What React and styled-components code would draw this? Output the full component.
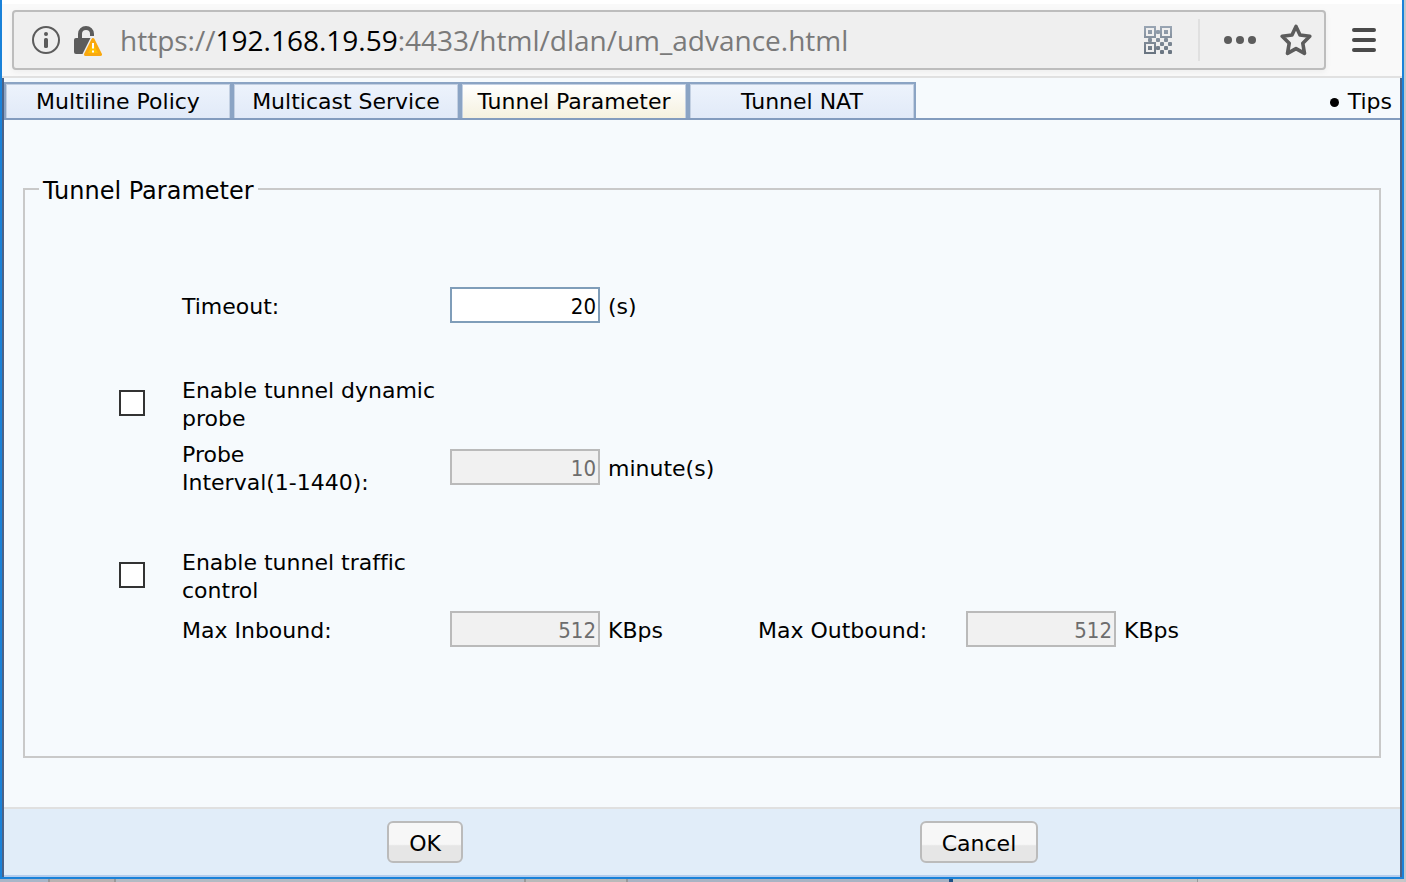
import React, { useState } from "react";
import styled, { createGlobalStyle } from "styled-components";

const GlobalStyle = createGlobalStyle`
  *, *::before, *::after { box-sizing: border-box; }
  body {
    margin: 0;
    background: #c3c6cb;
    color: #000;
    font-family: "DejaVu Sans", Verdana, sans-serif;
    font-size: 22px;
    line-height: 28px;
    font-variant-ligatures: none;
  }
`;

const Desktop = styled.div`
  display: flex;
  flex-direction: column;
  min-height: 100vh;
  padding-right: 2px;
`;

const Window = styled.div`
  flex: 1;
  display: flex;
  flex-direction: column;
  border: solid #1a82d9;
  border-width: 0 2px 2px;
`;

const Chrome = styled.header`
  display: flex;
  align-items: center;
  gap: 14px;
  height: 78px;
  padding: 4px 14px 0 10px;
  background: linear-gradient(#fff 4px, #f9f9f9 4px);
  border-bottom: 2px solid #e1e1e1;
`;

const AddressBar = styled.div`
  flex: 1;
  min-width: 0;
  display: flex;
  align-items: center;
  height: 60px;
  padding-left: 16px;
  background: #efefef;
  border: 2px solid #bdbdbd;
  border-radius: 4px;
  box-shadow: 0 2px 6px rgba(0, 0, 0, 0.05);
`;

const IconButton = styled.button`
  display: flex;
  flex: none;
  align-items: center;
  justify-content: center;
  width: ${(p) => p.$width || 56}px;
  height: 40px;
  padding: 0;
  border: 0;
  background: none;
`;

const Address = styled.div`
  flex: 1;
  min-width: 0;
  padding-left: 6px;
  overflow: hidden;
  white-space: nowrap;
  font-family: "Open Sans", "Segoe UI", sans-serif;
  font-size: 28px;
  line-height: 40px;
  color: #7a7a7a;
`;

const Host = styled.span`
  color: #000;
`;

const Separator = styled.span`
  width: 2px;
  height: 42px;
  margin: 0 12px 0 24px;
  background: #e0e0e0;
`;

const Page = styled.main`
  flex: 1;
  display: flex;
  flex-direction: column;
  background: #f6fafd;
  border: solid #4a6389;
  border-width: 0 2px;
`;

const TabBar = styled.nav`
  display: flex;
  align-items: stretch;
  height: 42px;
  padding-top: 4px;
  border-bottom: 2px solid #839cbe;
`;

const Tab = styled.button`
  width: 228px;
  padding: 2px 0 0;
  border: solid #8ba4c4;
  border-width: 2px 2px 0;
  box-shadow: inset 1px 1px 0 #c3d0e2, inset -1px 0 0 #c3d0e2;
  background: ${(p) =>
    p.$active
      ? "linear-gradient(#ffffff, #f5f1df)"
      : "linear-gradient(#edf3fc, #e1eaf8)"};
  color: #000;
  font: inherit;
`;

const Tips = styled.a`
  display: flex;
  align-items: center;
  gap: 9px;
  margin-left: auto;
  padding: 4px 8px 0 0;
  color: #000;
  text-decoration: none;

  &::before {
    content: "";
    width: 9px;
    height: 9px;
    border-radius: 50%;
    background: #000;
  }
`;

const Form = styled.form`
  flex: 1;
  display: flex;
  flex-direction: column;
`;

const Group = styled.fieldset`
  flex: 1;
  min-width: 0;
  margin: 51px 19px 49px;
  padding: 80px 0 0 92px;
  border: 2px solid #c9c9c9;
`;

const Legend = styled.legend`
  margin-left: -78px;
  padding: 4px 4px 0;
  font-size: 24px;
  line-height: 32px;
`;

const Row = styled.div`
  display: grid;
  grid-template-columns: 65px 268px 308px 208px 1fr;
  align-items: center;
  min-height: ${(p) => p.$height || 64}px;
  margin-bottom: ${(p) => p.$after || 0}px;
`;

const Label = styled.label`
  grid-column: ${(p) => p.$column || 2};
  max-width: ${(p) => (p.$narrow ? "220px" : "none")};
  padding-top: 4px;
`;

const Unbroken = styled.span`
  display: inline-block;
  white-space: nowrap;
`;

const Check = styled.input`
  appearance: none;
  width: 26px;
  height: 26px;
  margin: 0 0 0 2px;
  border: 2px solid #333;
  background: #fff;

  &:checked {
    box-shadow: inset 0 0 0 4px #fff;
    background: #333;
  }
`;

const Field = styled.div`
  display: flex;
  align-items: center;
  gap: 8px;
`;

const Unit = styled.span`
  padding-top: 4px;
`;

const NumberBox = styled.input`
  width: 150px;
  height: 36px;
  padding: 2px 2px 0;
  border: 2px solid #7f9db9;
  border-radius: 0;
  background: #fff;
  color: #000;
  font-family: "DejaVu Sans Condensed", Tahoma, sans-serif;
  font-size: 22px;
  text-align: right;

  &:disabled {
    border-color: #bababa;
    background: #f1f1f1;
    color: #6d6d6d;
  }
`;

const Footer = styled.footer`
  display: grid;
  grid-template-columns: 1fr 1fr;
  justify-items: center;
  padding: 12px 144px;
  background: #e1edf9;
  border-top: 2px solid #e0e0e0;
  border-bottom: 2px solid #b4cdee;
`;

const ActionButton = styled.button`
  height: 42px;
  padding: 4px 20px 0;
  border: 2px solid #bbb;
  border-radius: 6px;
  background: linear-gradient(#f7f7f7 56%, #e6e6e6 60%);
  color: #000;
  font: inherit;
`;

const Behind = styled.div`
  height: 3px;
  background: linear-gradient(
    90deg,
    #a9b6c8 0 48px, #999 48px 50px, #b9b2b2 50px 114px, #999 114px 116px,
    #b3bac3 116px 524px, #999 524px 526px, #b9b9b9 526px 626px, #999 626px 628px,
    #a9b3c3 628px 949px, #1f5186 949px 953px, #c4c4c4 953px 1197px, #999 1197px 1198px,
    #c8c8c8 1198px
  );
`;

const InfoIcon = () => (
  <svg width="28" height="28" viewBox="0 0 28 28">
    <circle cx="14" cy="14" r="13" fill="none" stroke="#5c5c5c" strokeWidth="2" />
    <circle cx="14" cy="8" r="2" fill="#5c5c5c" />
    <rect x="12" y="12" width="4" height="10" rx="1.6" fill="#5c5c5c" />
  </svg>
);

const LockIcon = () => (
  <svg width="28" height="32" viewBox="0 -2 28 32">
    <path d="M6 13V8a6 6 0 0 1 12 0v2" fill="none" stroke="#5c5c5c" strokeWidth="4" />
    <path d="M2 12h14.500l-8 16H2a2 2 0 0 1-2-2V14a2 2 0 0 1 2-2z" fill="#5c5c5c" />
    <path
      d="M19 13.500L26.500 28.500H11.500z"
      fill="#ffbf00"
      stroke="#f9a80f"
      strokeWidth="3"
      strokeLinejoin="round"
    />
    <path d="M19 17v5.500M19 24.500v2" stroke="#fff" strokeWidth="2" />
  </svg>
);

const QR_CELLS = [
  [3, 1], [1, 3], [3, 3], [5, 3], [4, 4], [6, 4], [3, 5], [5, 5], [4, 6], [6, 6],
];

const QrIcon = () => (
  <svg width="28" height="28" viewBox="0 0 28 28">
    <defs>
      <linearGradient id="qr" gradientUnits="userSpaceOnUse" x1="0" y1="0" x2="0" y2="28">
        <stop offset="0" stopColor="#9aa6b4" />
        <stop offset="1" stopColor="#68737f" />
      </linearGradient>
    </defs>
    <path
      d="M1 1h10v10H1zM17 1h10v10H17zM1 17h10v10H1z"
      fill="none"
      stroke="url(#qr)"
      strokeWidth="2"
    />
    <g fill="url(#qr)">
      <path d="M4 4h4v4H4zM20 4h4v4h-4zM4 20h4v4H4z" />
      {QR_CELLS.map(([x, y]) => (
        <rect key={`${x}-${y}`} x={x * 4} y={y * 4} width="4" height="4" rx="1" />
      ))}
    </g>
  </svg>
);

const DotsIcon = () => (
  <svg width="32" height="8" viewBox="0 0 32 8" fill="#5c5c5c">
    <circle cx="4" cy="4" r="4" />
    <circle cx="16" cy="4" r="4" />
    <circle cx="28" cy="4" r="4" />
  </svg>
);

const StarIcon = () => (
  <svg width="32" height="32" viewBox="0 0 32 32">
    <path
      d="M16 2.400L20 11l9.800 1.300-7 6.900 1.700 10.200L16 24.600l-8.500 4.800 1.700-10.200-7-6.900L12 11z"
      fill="none"
      stroke="#5c5c5c"
      strokeWidth="3.600"
      strokeLinejoin="round"
    />
  </svg>
);

const MenuIcon = () => (
  <svg width="24" height="24" viewBox="0 0 24 24">
    <path d="M2 2h20M2 12h20M2 22h20" stroke="#4a4a4a" strokeWidth="4" strokeLinecap="round" />
  </svg>
);

const TABS = ["Multiline Policy", "Multicast Service", "Tunnel Parameter", "Tunnel NAT"];

function NumberField({ id, value, unit, disabled }) {
  return (
    <Field>
      <NumberBox id={id} type="text" inputMode="numeric" defaultValue={value} disabled={disabled} />
      <Unit>{unit}</Unit>
    </Field>
  );
}

export default function App() {
  const [tab, setTab] = useState("Tunnel Parameter");
  const [probe, setProbe] = useState(false);
  const [traffic, setTraffic] = useState(false);

  return (
    <Desktop>
      <GlobalStyle />
      <Window>
        <Chrome>
          <AddressBar>
            <IconButton $width={32} aria-label="Site information"><InfoIcon /></IconButton>
            <IconButton $width={52} aria-label="Connection"><LockIcon /></IconButton>
            <Address>
              https://<Host>192.168.19.59</Host>:4433/html/dlan/um_advance.html
            </Address>
            <IconButton $width={32} aria-label="QR code"><QrIcon /></IconButton>
            <Separator />
            <IconButton aria-label="Page actions"><DotsIcon /></IconButton>
            <IconButton aria-label="Bookmark"><StarIcon /></IconButton>
          </AddressBar>
          <IconButton $width={48} aria-label="Menu"><MenuIcon /></IconButton>
        </Chrome>
        <Page>
          <TabBar>
            {TABS.map((name) => (
              <Tab key={name} type="button" $active={name === tab} onClick={() => setTab(name)}>
                {name}
              </Tab>
            ))}
            <Tips href="#tips">Tips</Tips>
          </TabBar>
          <Form onSubmit={(e) => e.preventDefault()}>
            <Group>
              <Legend>Tunnel Parameter</Legend>
              <Row $height={36} $after={48}>
                <Label htmlFor="timeout">Timeout:</Label>
                <NumberField id="timeout" value="20" unit="(s)" />
              </Row>
              <Row>
                <Check
                  id="probe"
                  type="checkbox"
                  checked={probe}
                  onChange={(e) => setProbe(e.target.checked)}
                />
                <Label htmlFor="probe">Enable tunnel dynamic probe</Label>
              </Row>
              <Row $after={44}>
                <Label htmlFor="interval" $narrow>
                  Probe <Unbroken>Interval(1-1440):</Unbroken>
                </Label>
                <NumberField id="interval" value="10" unit="minute(s)" disabled={!probe} />
              </Row>
              <Row>
                <Check
                  id="traffic"
                  type="checkbox"
                  checked={traffic}
                  onChange={(e) => setTraffic(e.target.checked)}
                />
                <Label htmlFor="traffic">Enable tunnel traffic control</Label>
              </Row>
              <Row $height={44}>
                <Label htmlFor="inbound">Max Inbound:</Label>
                <NumberField id="inbound" value="512" unit="KBps" disabled={!traffic} />
                <Label htmlFor="outbound" $column={4}>Max Outbound:</Label>
                <NumberField id="outbound" value="512" unit="KBps" disabled={!traffic} />
              </Row>
            </Group>
            <Footer>
              <ActionButton type="submit">OK</ActionButton>
              <ActionButton type="button">Cancel</ActionButton>
            </Footer>
          </Form>
        </Page>
      </Window>
      <Behind />
    </Desktop>
  );
}
